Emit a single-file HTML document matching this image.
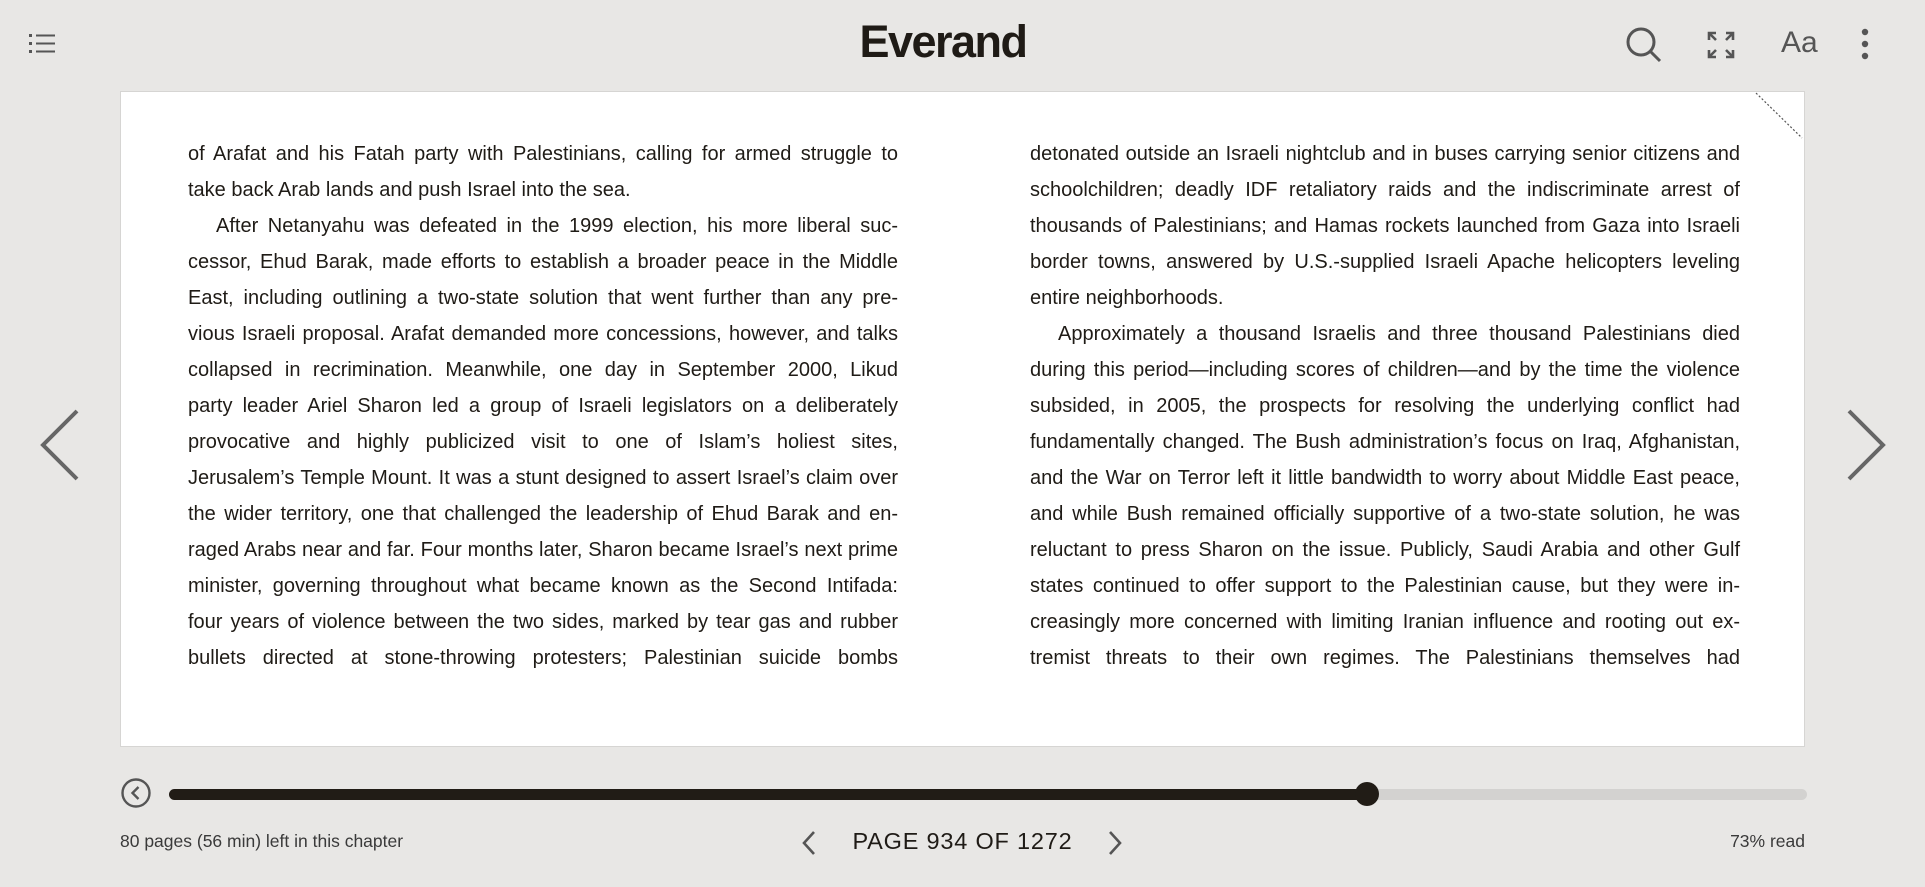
<!DOCTYPE html>
<html><head><meta charset="utf-8"><style>
*{margin:0;padding:0;box-sizing:border-box}
body{width:1925px;height:887px;background:#e8e7e5;font-family:"Liberation Sans",sans-serif;position:relative;overflow:hidden;color:#1f1b16}
.logo{position:absolute;left:0;width:1886px;text-align:center;top:16px;font-size:45px;font-weight:bold;letter-spacing:-1.5px;color:#1f1b16}
.page{position:absolute;left:120px;top:91px;width:1685px;height:656px;background:#fff;border:1px solid #d6d5d3}
.col{position:absolute;top:44px;width:710px;font-size:20px;color:#1f1b16}
.col div{height:36px;line-height:36px;text-align:justify;text-align-last:justify;white-space:nowrap;overflow:visible}
.col div.l{text-align-last:left}
.col div.i{padding-left:28px}
.bot{position:absolute;top:831px;font-size:17.5px;color:#3a3a3a}
</style></head><body>
<svg style="position:absolute;left:29px;top:33px" width="28" height="22" viewBox="0 0 28 22" fill="#555"><rect x="0" y="1" width="3" height="3"/><rect x="7" y="1.5" width="19" height="2"/><rect x="0" y="9" width="3" height="3"/><rect x="7" y="9.5" width="19" height="2"/><rect x="0" y="17" width="3" height="3"/><rect x="7" y="17.5" width="19" height="2"/></svg>
<div class="logo">Everand</div>
<svg style="position:absolute;left:1624px;top:25px" width="40" height="40" viewBox="0 0 40 40" fill="none" stroke="#555" stroke-width="3"><circle cx="17" cy="17" r="13"/><line x1="26.5" y1="26.5" x2="36" y2="36"/></svg>
<svg style="position:absolute;left:1707px;top:31px" width="28" height="28" viewBox="0 0 28 28" fill="none" stroke="#555" stroke-width="2.6"><path d="M2 9V2h7M2 2l7 7M19 2h7v7M26 2l-7 7M2 19v7h7M2 26l7-7M26 19v7h-7M26 26l-7-7"/></svg>
<div style="position:absolute;left:1781px;top:26px;font-size:30px;color:#555">Aa</div>
<svg style="position:absolute;left:1860px;top:28px" width="10" height="32" fill="#555"><circle cx="5" cy="4" r="3.2"/><circle cx="5" cy="16" r="3.2"/><circle cx="5" cy="28" r="3.2"/></svg>
<div class="page">
<svg style="position:absolute;right:0;top:0" width="50" height="48"><line x1="2" y1="1" x2="48" y2="46" stroke="#555" stroke-width="1.2" stroke-dasharray="2 2"/></svg>
<div class="col" style="left:67px">
<div>of Arafat and his Fatah party with Palestinians, calling for armed struggle to</div>
<div class="l">take back Arab lands and push Israel into the sea.</div>
<div class="i">After Netanyahu was defeated in the 1999 election, his more liberal suc-</div>
<div>cessor, Ehud Barak, made efforts to establish a broader peace in the Middle</div>
<div>East, including outlining a two-state solution that went further than any pre-</div>
<div>vious Israeli proposal. Arafat demanded more concessions, however, and talks</div>
<div>collapsed in recrimination. Meanwhile, one day in September 2000, Likud</div>
<div>party leader Ariel Sharon led a group of Israeli legislators on a deliberately</div>
<div>provocative and highly publicized visit to one of Islam’s holiest sites,</div>
<div>Jerusalem’s Temple Mount. It was a stunt designed to assert Israel’s claim over</div>
<div>the wider territory, one that challenged the leadership of Ehud Barak and en-</div>
<div>raged Arabs near and far. Four months later, Sharon became Israel’s next prime</div>
<div>minister, governing throughout what became known as the Second Intifada:</div>
<div>four years of violence between the two sides, marked by tear gas and rubber</div>
<div>bullets directed at stone-throwing protesters; Palestinian suicide bombs</div>
</div>
<div class="col" style="left:909px">
<div>detonated outside an Israeli nightclub and in buses carrying senior citizens and</div>
<div>schoolchildren; deadly IDF retaliatory raids and the indiscriminate arrest of</div>
<div>thousands of Palestinians; and Hamas rockets launched from Gaza into Israeli</div>
<div>border towns, answered by U.S.-supplied Israeli Apache helicopters leveling</div>
<div class="l">entire neighborhoods.</div>
<div class="i">Approximately a thousand Israelis and three thousand Palestinians died</div>
<div>during this period—including scores of children—and by the time the violence</div>
<div>subsided, in 2005, the prospects for resolving the underlying conflict had</div>
<div>fundamentally changed. The Bush administration’s focus on Iraq, Afghanistan,</div>
<div>and the War on Terror left it little bandwidth to worry about Middle East peace,</div>
<div>and while Bush remained officially supportive of a two-state solution, he was</div>
<div>reluctant to press Sharon on the issue. Publicly, Saudi Arabia and other Gulf</div>
<div>states continued to offer support to the Palestinian cause, but they were in-</div>
<div>creasingly more concerned with limiting Iranian influence and rooting out ex-</div>
<div>tremist threats to their own regimes. The Palestinians themselves had</div>
</div>
</div>
<svg style="position:absolute;left:39px;top:409px" width="42" height="72" fill="none" stroke="#666" stroke-width="4"><path d="M38 2L4 36l34 34"/></svg>
<svg style="position:absolute;left:1845px;top:409px" width="42" height="72" fill="none" stroke="#666" stroke-width="4"><path d="M4 2l34 34L4 70"/></svg>
<svg style="position:absolute;left:120px;top:777px" width="32" height="32" fill="none" stroke="#555" stroke-width="2.4"><circle cx="16" cy="16" r="13.5"/><path d="M18.5 10l-6 6 6 6"/></svg>
<div style="position:absolute;left:169px;top:789px;width:1638px;height:11px;border-radius:6px;background:#d3d2d0"></div>
<div style="position:absolute;left:169px;top:789px;width:1198px;height:11px;border-radius:6px;background:#211c16"></div>
<div style="position:absolute;left:1355px;top:782px;width:24px;height:24px;border-radius:50%;background:#211c16"></div>
<div class="bot" style="left:120px">80 pages (56 min) left in this chapter</div>
<svg style="position:absolute;left:801px;top:830px" width="16" height="26" fill="none" stroke="#555" stroke-width="2.6"><path d="M13 2L3 13l10 11"/></svg>
<div style="position:absolute;left:0;width:1925px;text-align:center;top:828px;font-size:23.5px;letter-spacing:0.8px;color:#1f1b16">PAGE 934 OF 1272</div>
<svg style="position:absolute;left:1107px;top:830px" width="16" height="26" fill="none" stroke="#555" stroke-width="2.6"><path d="M3 2l10 11L3 24"/></svg>
<div class="bot" style="right:120px">73% read</div>
</body></html>
